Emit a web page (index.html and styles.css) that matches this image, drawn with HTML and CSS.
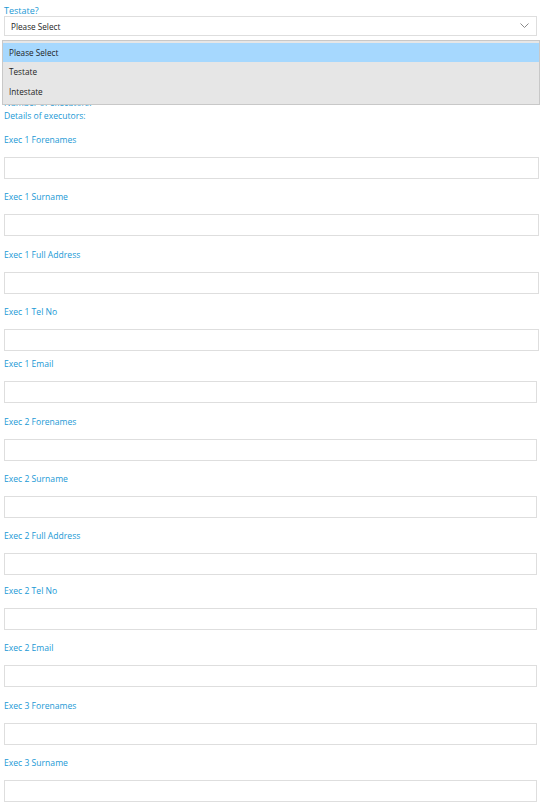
FILE: index.html
```html
<!DOCTYPE html>
<html lang="en">
<head>
<meta charset="utf-8">
<title>Executors</title>
<link rel="stylesheet" href="styles.css">
</head>
<body>
<div class="form">
  <div class="top-field">
    <label class="label label-top">Testate?</label>
    <div class="select">
      <span class="select-value">Please Select</span>
      <svg class="chev" width="9" height="6" viewBox="0 0 9 6"><polyline points="0.5,0.5 4.5,4.5 8.5,0.5" fill="none" stroke="#8a8a8a" stroke-width="1"/></svg>
    </div>
    <ul class="dropdown">
      <li class="opt opt-active">Please Select</li>
      <li class="opt">Testate</li>
      <li class="opt">Intestate</li>
    </ul>
  </div>
  <div class="label hidden-label">Number of executors:</div>
  <div class="label section">Details of executors:</div>

  <div class="field g9"><label class="label">Exec 1 Forenames</label><input class="input wide" type="text"></div>
  <div class="field g10"><label class="label">Exec 1 Surname</label><input class="input wide" type="text"></div>
  <div class="field g9"><label class="label">Exec 1 Full Address</label><input class="input wide" type="text"></div>
  <div class="field g4"><label class="label">Exec 1 Tel No</label><input class="input wide" type="text"></div>
  <div class="field g10"><label class="label">Exec 1 Email</label><input class="input" type="text"></div>
  <div class="field g9"><label class="label">Exec 2 Forenames</label><input class="input" type="text"></div>
  <div class="field g9"><label class="label">Exec 2 Surname</label><input class="input" type="text"></div>
  <div class="field g7"><label class="label">Exec 2 Full Address</label><input class="input" type="text"></div>
  <div class="field g9"><label class="label">Exec 2 Tel No</label><input class="input" type="text"></div>
  <div class="field g10"><label class="label">Exec 2 Email</label><input class="input" type="text"></div>
  <div class="field g9"><label class="label">Exec 3 Forenames</label><input class="input" type="text"></div>
  <div class="field g9"><label class="label">Exec 3 Surname</label><input class="input" type="text"></div>
</div>
</body>
</html>
```
FILE: styles.css
```css
html, body {
  margin: 0;
  padding: 0;
  background: #ffffff;
}
body {
  font-family: "Open Sans", "Noto Sans", sans-serif;
  overflow: hidden;
}
.form {
  padding: 5px 0 0 4px;
  display: flex;
  flex-direction: column;
}
.label {
  display: block;
  color: #1a99d5;
  font-size: 8.6px;
  line-height: 16px;
  height: 15px;
  padding-top: 1px;
}
.label-top {
  font-size: 9px;
  line-height: 11px;
  height: 11px;
  padding-top: 0;
}
.top-field {
  position: relative;
}
.select {
  box-sizing: border-box;
  width: 533px;
  height: 20px;
  border: 1px solid #dedede;
  background: #fff;
  display: flex;
  align-items: center;
  justify-content: space-between;
  padding: 0 7px 0 6px;
}
.select-value {
  font-size: 8.2px;
  color: #1e1e1e;
}
.chev {
  display: block;
}
.dropdown {
  position: absolute;
  left: -2px;
  top: 35px;
  width: 538px;
  height: 65px;
  box-sizing: border-box;
  margin: 0;
  padding: 2px 0 0;
  list-style: none;
  background: #e6e6e6;
  border: 1px solid #c8c8c8;
  z-index: 2;
}
.opt {
  height: 20px;
  line-height: 20px;
  font-size: 8.2px;
  color: #1e1e1e;
  padding-left: 6px;
}
.opt-active {
  background: #a6d8fe;
  height: 19px;
  line-height: 19px;
}
.hidden-label {
  margin-top: 58px;
  color: #2aa0d8;
}
.section {
  margin-top: -3px;
}
.field {
  display: flex;
  flex-direction: column;
}
.section + .field {
  margin-top: 8px;
}
.field .label {
  margin-bottom: 10px;
}
.input {
  box-sizing: border-box;
  width: 533px;
  height: 22px;
  border: 1px solid #dedede;
  margin: 0;
  padding: 0 4px;
  background: #fff;
  outline: none;
}
.input.wide {
  width: 535px;
}
.g9 { margin-bottom: 9px; }
.g10 { margin-bottom: 10px; }
.g7 { margin-bottom: 7px; }
.g4 { margin-bottom: 4px; }
```
